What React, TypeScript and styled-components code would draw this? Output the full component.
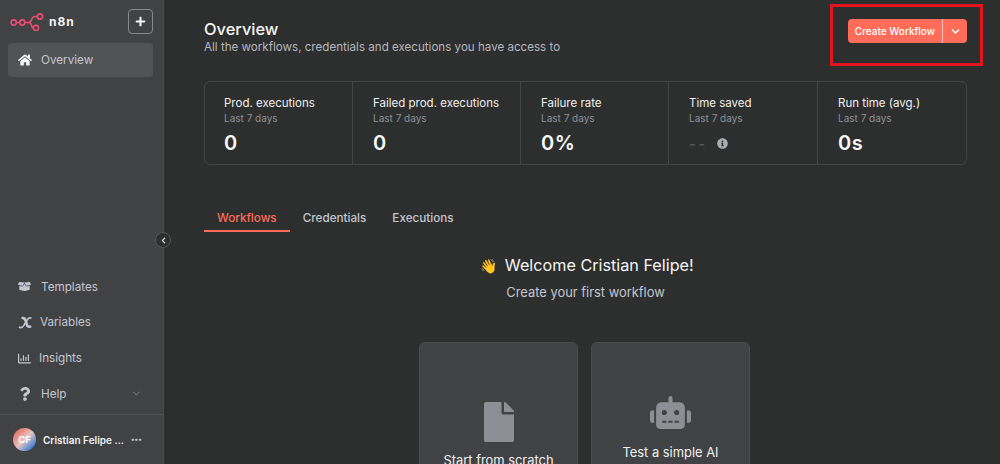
import React from 'react';
import styled, { createGlobalStyle } from 'styled-components';
import { FaHome, FaBoxOpen, FaRegChartBar, FaQuestion, FaFile, FaRobot, FaInfoCircle, FaChevronDown, FaChevronLeft, FaPlus } from 'react-icons/fa';
import { LuChevronDown } from 'react-icons/lu';

const GlobalStyle = createGlobalStyle`
  html, body {
    margin: 0;
    height: 100%;
    background: #2d2e2e;
    font-family: Inter, "Noto Sans", sans-serif;
    overflow: hidden;
  }
`;

const Page = styled.div`
  display: flex;
  width: 1000px;
  height: 464px;
  overflow: hidden;
  position: relative;
`;

const Sidebar = styled.aside`
  position: relative;
  width: 164px;
  flex: none;
  box-sizing: border-box;
  display: flex;
  flex-direction: column;
  background: #414244;
  border-right: 1px solid #4a4b4d;
`;

const Brand = styled.div`
  display: flex;
  align-items: center;
  height: 43px;
  padding: 0 10px 0 10px;
  box-sizing: border-box;
`;

const BrandName = styled.span`
  margin-left: 5px;
  flex: 1;
  font-size: 12px;
  font-weight: 700;
  letter-spacing: 1px;
  color: #f5f5f5;
`;

const AddButton = styled.button`
  width: 25px;
  height: 25px;
  padding: 0;
  display: flex;
  align-items: center;
  justify-content: center;
  background: transparent;
  color: #f5f5f5;
  border: 1px solid #85878a;
  border-radius: 4px;
`;

const NavList = styled.nav`
  display: flex;
  flex-direction: column;
  padding: 0 10px 0 8px;
`;

const BottomNav = styled(NavList)`
  margin-top: auto;
  gap: 1.67px;
  padding-bottom: 3.3px;
`;

const NavItem = styled.div<{ $active?: boolean }>`
  display: flex;
  align-items: center;
  height: 34px;
  padding-left: 10px;
  border-radius: 4px;
  font-size: 11.7px;
  color: #c4c7d0;
  background: ${p => (p.$active ? '#525355' : 'transparent')};
`;

const NavIcon = styled.span<{ $width?: number }>`
  width: ${p => p.$width ?? 23}px;
  flex: none;
  display: flex;
  align-items: center;
  color: #c4c7d0;
`;

const NavArrow = styled.span`
  margin-left: auto;
  margin-right: 11px;
  display: flex;
  color: #8d8f95;
`;

const CollapseButton = styled.button`
  position: absolute;
  top: 232px;
  right: -8px;
  width: 16px;
  height: 16px;
  padding: 0;
  display: flex;
  align-items: center;
  justify-content: center;
  border-radius: 50%;
  border: 1px solid #55565a;
  background: #2d2e2e;
  color: #e0e1e4;
`;

const UserRow = styled.div`
  display: flex;
  align-items: center;
  height: 49px;
  padding: 0 0 0 13px;
  border-top: 1px solid #525355;
`;

const Avatar = styled.div`
  width: 23px;
  height: 23px;
  flex: none;
  border-radius: 50%;
  display: flex;
  align-items: center;
  justify-content: center;
  font-size: 9.5px;
  font-weight: 700;
  color: #fff;
  background: linear-gradient(135deg, #e5746a 15%, #e8c5c0 50%, #3f7fd6 85%);
`;

const UserName = styled.span`
  margin-left: 7px;
  font-size: 10px;
  font-weight: 600;
  color: #f0f0f0;
  white-space: nowrap;
`;

const UserMenu = styled.span`
  margin-left: 7px;
  font-size: 7.5px;
  font-weight: 700;
  color: #c4c7d0;
`;

const Main = styled.main`
  flex: 1;
  min-width: 0;
  box-sizing: border-box;
  padding: 0 33px 0 40px;
  display: flex;
  flex-direction: column;
`;

const Header = styled.header`
  display: flex;
  flex: none;
  justify-content: space-between;
  height: 81px;
`;

const TitleBlock = styled.div`
  padding-top: 19px;
`;

const Title = styled.h1`
  margin: 0;
  font-size: 16.4px;
  line-height: 20px;
  font-weight: 500;
  color: #f5f5f5;
`;

const Subtitle = styled.p`
  margin: 1px 0 0;
  font-size: 11.6px;
  line-height: 15px;
  color: #b5b7be;
`;

const SplitButton = styled.div`
  display: flex;
  height: 24px;
  margin-top: 19px;
  border-radius: 4px;
  overflow: hidden;
  background: #ff6d5a;
  color: #fff;
`;

const ButtonLabel = styled.span`
  display: flex;
  align-items: center;
  padding: 0 7px;
  font-size: 10px;
  font-weight: 500;
  border-right: 1px solid #ffc2ba;
`;

const ButtonCaret = styled.span`
  width: 24px;
  display: flex;
  align-items: center;
  justify-content: center;
`;

const Annotation = styled.div`
  position: absolute;
  left: 830px;
  top: 4px;
  width: 153px;
  height: 62px;
  box-sizing: border-box;
  border: 3px solid #e3141b;
  pointer-events: none;
`;

const StatsCard = styled.section`
  display: grid;
  flex: none;
  grid-template-columns: 147px 168px 148px 149px 1fr;
  height: 84px;
  box-sizing: border-box;
  border: 1px solid #444547;
  border-radius: 6px;
`;

const Stat = styled.div`
  box-sizing: border-box;
  padding: 14px 0 0 20px;
  border-left: 1px solid #444547;

  &:first-child {
    padding-left: 19px;
    border-left: 0;
  }
`;

const StatLabel = styled.div`
  font-size: 11.5px;
  line-height: 15px;
  color: #f0f0f0;
  white-space: nowrap;
`;

const StatPeriod = styled.div`
  font-size: 10px;
  line-height: 14px;
  color: #8f9198;
`;

const StatValue = styled.div`
  display: flex;
  align-items: center;
  margin-top: 6px;
  height: 24px;
  font-size: 20px;
  font-weight: 600;
  letter-spacing: 0.6px;
  color: #f8f8f8;
`;

const StatEmpty = styled.span`
  font-size: 14px;
  letter-spacing: 3px;
  color: #56585b;
`;

const StatInfo = styled.span`
  display: flex;
  margin-left: 9px;
  color: #a9abb1;
`;

const Tabs = styled.div`
  display: flex;
  flex: none;
  margin-top: 41px;
  height: 26px;
`;

const Tab = styled.div<{ $active?: boolean }>`
  padding: 5px 13px 0;
  display: flex;
  align-items: flex-start;
  box-sizing: border-box;
  font-size: 11.7px;
  font-weight: 500;
  color: ${p => (p.$active ? '#ff6d5a' : '#c4c7d0')};
  border-bottom: 2px solid ${p => (p.$active ? '#ff6d5a' : 'transparent')};
`;

const Welcome = styled.div`
  display: flex;
  flex: none;
  flex-direction: column;
  align-items: center;
  margin-top: 21px;
`;

const Greeting = styled.h2`
  margin: 0 0 0 3px;
  font-size: 16.2px;
  line-height: 24px;
  font-weight: 400;
  color: #f5f5f5;
`;

const Emoji = styled.span`
  margin-right: 7px;
  font-family: "Noto Color Emoji", sans-serif;
  font-size: 14px;
`;

const Lead = styled.p`
  margin: 5px 0 0;
  font-size: 12.9px;
  line-height: 20px;
  color: #c4c7d0;
`;

const CardRow = styled.div`
  display: flex;
  gap: 13px;
  margin: 39px 2px 0 0;
`;

const ActionCard = styled.div`
  width: 159px;
  height: 230px;
  box-sizing: border-box;
  padding-top: 57px;
  display: flex;
  flex-direction: column;
  align-items: center;
  background: #414244;
  border: 1px solid #4a4b4d;
  border-radius: 6px;
  color: #8e8f94;
`;

const CardIcon = styled.div<{ $height: number }>`
  height: ${p => p.$height}px;
  display: flex;
  align-items: center;
`;

const CardLabel = styled.div<{ $gap: number }>`
  margin-top: ${p => p.$gap}px;
  font-size: 12.9px;
  line-height: 18px;
  color: #f0f0f0;
`;

function LogoMark() {
  return (
    <svg width="34" height="18" viewBox="0 0 34 18" fill="none" stroke="#ea4b71" strokeWidth="1.6">
      <circle cx="3.7" cy="9.5" r="2.6" />
      <circle cx="12.3" cy="9.5" r="2.6" />
      <circle cx="30" cy="3.5" r="2.6" />
      <circle cx="26" cy="15" r="2.6" />
      <path d="M6.3 9.5h3.4M14.9 9.5h3.6c2.2 0 2.6-1.2 3.2-3 .6-2 1.6-3 3.4-3h2.3M18.5 9.5c2.2 0 2.6 1 3 2.8.4 1.8 1 2.7 1.9 2.7" />
    </svg>
  );
}

function VariableIcon() {
  return (
    <svg width="14" height="13" viewBox="0 0 14 13" fill="none" stroke="#c4c7d0" strokeLinecap="round">
      <path strokeWidth="2.6" d="M4.6 2c2 0 2.8 1 3.4 3.5l.8 3c.5 2 1.4 2.6 3.4 2" />
      <path strokeWidth="1.7" d="M1.5 11.2c1.6 1 3 .3 4.2-1.6l3-5C9.8 2.6 11 1.2 12.8 2" />
    </svg>
  );
}

const statItems = [
  { label: 'Prod. executions', value: '0' },
  { label: 'Failed prod. executions', value: '0' },
  { label: 'Failure rate', value: '0%' },
  { label: 'Time saved', value: null },
  { label: 'Run time (avg.)', value: '0s' },
];

export default function App() {
  return (
    <Page>
      <GlobalStyle />
      <Sidebar>
        <Brand>
          <LogoMark />
          <BrandName>n8n</BrandName>
          <AddButton><FaPlus size={11} /></AddButton>
        </Brand>
        <NavList>
          <NavItem $active>
            <NavIcon><FaHome size={14} color="#f5f5f5" /></NavIcon>
            Overview
          </NavItem>
        </NavList>
        <CollapseButton><FaChevronLeft size={7} /></CollapseButton>
        <BottomNav>
          <NavItem><NavIcon><FaBoxOpen size={13} /></NavIcon>Templates</NavItem>
          <NavItem><NavIcon $width={22}><VariableIcon /></NavIcon>Variables</NavItem>
          <NavItem><NavIcon $width={21}><FaRegChartBar size={13} /></NavIcon>Insights</NavItem>
          <NavItem>
            <NavIcon><FaQuestion size={14} /></NavIcon>
            Help
            <NavArrow><LuChevronDown size={11} /></NavArrow>
          </NavItem>
        </BottomNav>
        <UserRow>
          <Avatar>CF</Avatar>
          <UserName>Cristian Felipe ...</UserName>
          <UserMenu>•••</UserMenu>
        </UserRow>
      </Sidebar>
      <Main>
        <Header>
          <TitleBlock>
            <Title>Overview</Title>
            <Subtitle>All the workflows, credentials and executions you have access to</Subtitle>
          </TitleBlock>
          <SplitButton>
            <ButtonLabel>Create Workflow</ButtonLabel>
            <ButtonCaret><FaChevronDown size={9} /></ButtonCaret>
          </SplitButton>
        </Header>
        <StatsCard>
          {statItems.map(item => (
            <Stat key={item.label}>
              <StatLabel>{item.label}</StatLabel>
              <StatPeriod>Last 7 days</StatPeriod>
              <StatValue>
                {item.value ?? (
                  <>
                    <StatEmpty>--</StatEmpty>
                    <StatInfo><FaInfoCircle size={11} /></StatInfo>
                  </>
                )}
              </StatValue>
            </Stat>
          ))}
        </StatsCard>
        <Tabs>
          <Tab $active>Workflows</Tab>
          <Tab>Credentials</Tab>
          <Tab>Executions</Tab>
        </Tabs>
        <Welcome>
          <Greeting><Emoji>👋</Emoji>Welcome Cristian Felipe!</Greeting>
          <Lead>Create your first workflow</Lead>
          <CardRow>
            <ActionCard>
              <CardIcon $height={43}><FaFile size={40} /></CardIcon>
              <CardLabel $gap={9}>Start from scratch</CardLabel>
            </ActionCard>
            <ActionCard>
              <CardIcon $height={25}><FaRobot size={41} /></CardIcon>
              <CardLabel $gap={19}>Test a simple AI</CardLabel>
            </ActionCard>
          </CardRow>
        </Welcome>
      </Main>
      <Annotation />
    </Page>
  );
}
